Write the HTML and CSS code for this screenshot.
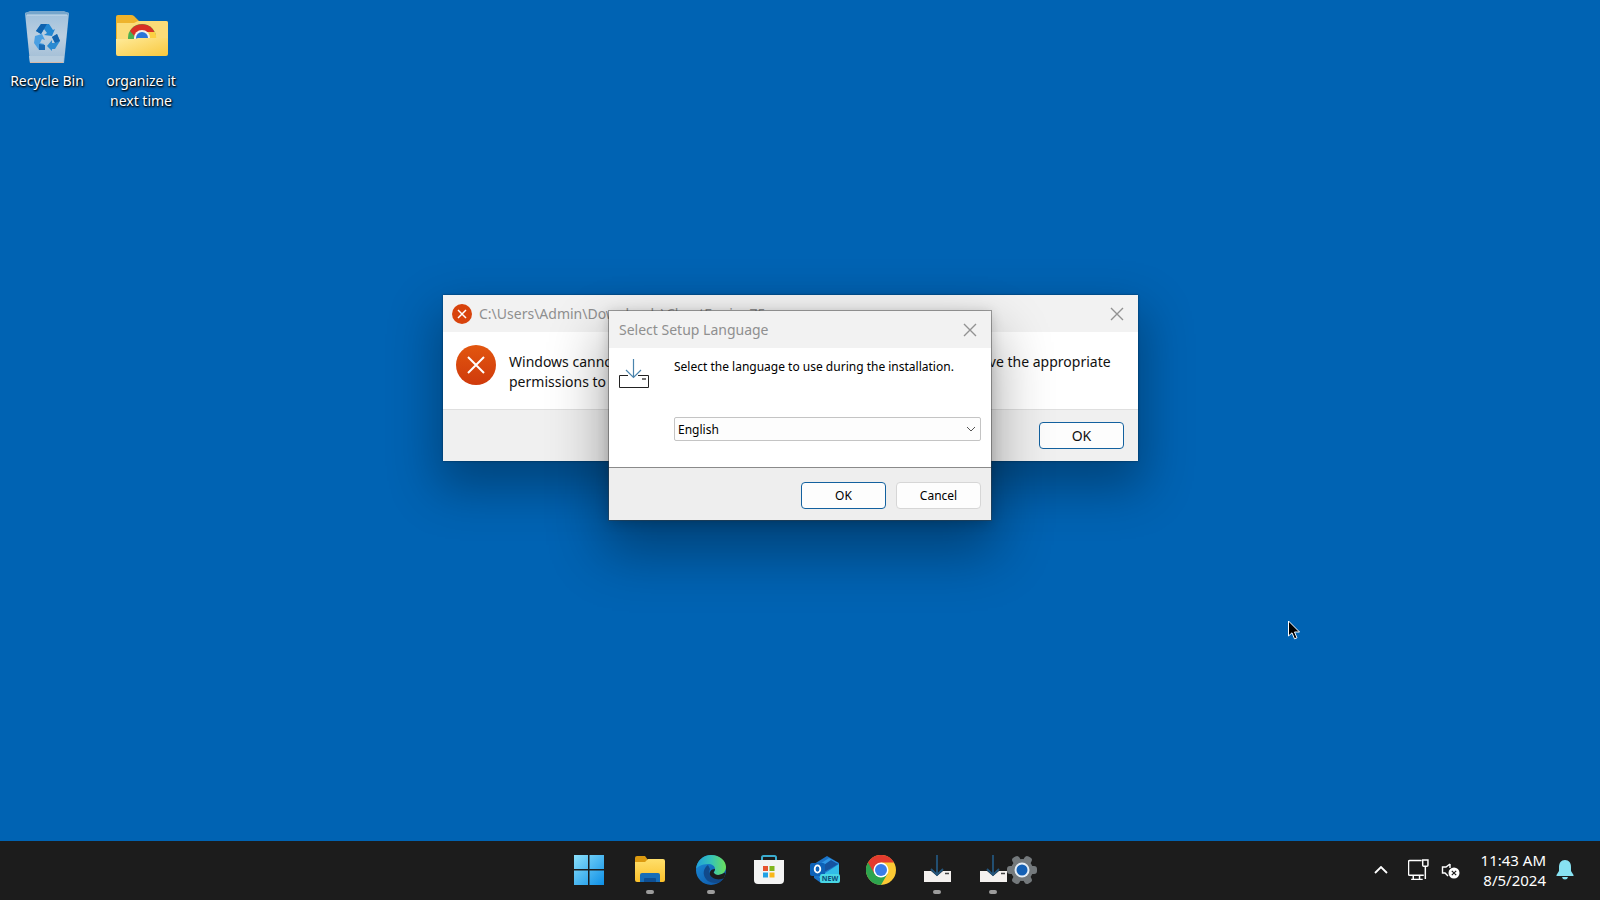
FILE: index.html
```html
<!DOCTYPE html>
<html lang="en">
<head>
<meta charset="utf-8">
<title>Desktop</title>
<link rel="stylesheet" href="styles.css">
</head>
<body>
<main class="desktop">
  <div class="shortcuts">
    <button class="shortcut" type="button">
      <svg class="shortcut-icon" viewBox="0 0 56 56" aria-hidden="true">
        <defs>
          <linearGradient id="bin" x1="0" y1="0" x2="0" y2="1"><stop offset="0" stop-color="#9dbfdb"/><stop offset=".5" stop-color="#bccfe0"/><stop offset="1" stop-color="#9fbcd5"/></linearGradient>
        </defs>
        <path d="M6 5l6-2h32l6 2-5 50H11z" fill="url(#bin)"/>
        <path d="M6 5l6-2h32l6 2-1 2H7z" fill="#76a6cc"/>
        <path d="M8 7h40" stroke="#c9dceb" stroke-width="1"/>
        <path d="M10 48h35l-1 7H11z" fill="#b5cbdd"/>
        <path d="M11 54.500h33" stroke="#d8b9a8" stroke-width="1"/>
        <path d="M22 16h8l4 6 2-1-3 7-8-1 3-2-3-4-3 5-5-3z" fill="#2387d2"/>
        <path d="M22 16h6l-6 10-5-3z" fill="#0f62ae"/>
        <path d="M16 28l7-2 3 6-3-1-2 4 4 1v6h-5l-5-7z" fill="#4a9fe2"/>
        <path d="M20 36l6 1v5h-6z" fill="#1a6ab4"/>
        <path d="M33 29l5-3 3 7-5 8h-3v2l-5-5 5-6v3h3z" fill="#2a8ad2"/>
        <path d="M33 29l5-3 3 7-5 2z" fill="#1564ae"/>
      </svg>
      <span>Recycle Bin</span>
    </button>
    <button class="shortcut" type="button">
      <svg class="shortcut-icon" viewBox="0 0 56 56" aria-hidden="true">
        <defs>
          <linearGradient id="fold" x1="0" y1="0" x2="1" y2="1"><stop offset="0" stop-color="#ffeb9a"/><stop offset="1" stop-color="#f8c83e"/></linearGradient>
          <clipPath id="peek"><path d="M10 10h40v21H10z"/></clipPath>
        </defs>
        <path d="M3 9q0-2 2-2h13q2 0 3 1l5 5h27q2 0 2 2v27H3z" fill="#eeb32c"/>
        <path d="M4 15h17l4-2h28q2 0 2 2v25H4z" fill="#fbdc78"/>
        <g clip-path="url(#peek)">
          <circle cx="29" cy="30" r="14" fill="#4caf50"/>
          <path d="M17 23a14 14 0 0 1 25 2H29l-6 5z" fill="#d93025"/>
          <path d="M29 24h13a14 14 0 0 1 1 8H29z" fill="#fdd043"/>
          <circle cx="29" cy="30" r="8" fill="#f4f0ea"/>
          <circle cx="29" cy="30" r="6" fill="#2b75d8"/>
        </g>
        <path d="M3 31h17q3 0 5-1h30v16q0 2-2 2H5q-2 0-2-2z" fill="url(#fold)"/>
      </svg>
      <span>organize it next time</span>
    </button>
  </div>

  <section class="window error-window" aria-label="Error">
    <header class="titlebar">
      <svg class="title-icon" viewBox="0 0 40 40" aria-hidden="true"><circle cx="20" cy="20" r="20" fill="#d8430c"/><path d="M12 12l16 16M28 12L12 28" stroke="#fff" stroke-width="3"/></svg>
      <h1 class="title">C:\Users\Admin\Downloads\CheatEngine75.exe</h1>
      <button class="close" type="button" aria-label="Close"><svg viewBox="0 0 14 14"><path d="M1 1l12 12M13 1L1 13"/></svg></button>
    </header>
    <div class="error-body">
      <svg class="error-icon" viewBox="0 0 40 40" aria-hidden="true">
        <defs><linearGradient id="err" x1="0" y1="0" x2="0" y2="1"><stop offset="0" stop-color="#e2560f"/><stop offset="1" stop-color="#cf3a0c"/></linearGradient></defs>
        <circle cx="20" cy="20" r="20" fill="url(#err)"/><path d="M12 12l16 16M28 12L12 28" stroke="#fff" stroke-width="2"/></svg>
      <p class="message">Windows cannot access the specified device, path, or file. You may not have the appropriate permissions to access the item.</p>
    </div>
    <footer class="error-foot"><button class="btn primary" type="button">OK</button></footer>
  </section>

  <section class="window setup-window" aria-label="Select Setup Language">
    <header class="titlebar">
      <h1 class="title">Select Setup Language</h1>
      <button class="close" type="button" aria-label="Close"><svg viewBox="0 0 14 14"><path d="M1 1l12 12M13 1L1 13"/></svg></button>
    </header>
    <div class="setup-body">
      <svg class="setup-icon" viewBox="0 0 32 32" aria-hidden="true">
        <path d="M10 17.500H1.500v12h29v-12H20" fill="none" stroke="#222" stroke-width="1"/>
        <path d="M24 21h4" stroke="#444" stroke-width="1.500"/>
        <path d="M15.500 1v18M8 12l7.500 7.500L23 12" fill="none" stroke="#4a84ad" stroke-width="1.200"/>
      </svg>
      <div class="setup-form">
        <label class="prompt" for="lang">Select the language to use during the installation.</label>
        <div class="combo">
          <select id="lang"><option>English</option></select>
          <svg class="combo-arrow" viewBox="0 0 10 6" aria-hidden="true"><path d="M1 1l4 4 4-4"/></svg>
        </div>
      </div>
    </div>
    <footer class="setup-foot">
      <button class="btn primary" type="button">OK</button>
      <button class="btn" type="button">Cancel</button>
    </footer>
  </section>

  <svg class="cursor" viewBox="0 0 12 20" aria-hidden="true"><path d="M.5 1v15l3.500-3.200 2.500 6 2.500-1-2.500-5.800h5z" fill="#000" stroke="#fff" stroke-width="1"/></svg>
</main>

<nav class="taskbar" aria-label="Taskbar">
  <div class="apps">
    <button class="app wide" type="button" aria-label="Start">
      <svg viewBox="0 0 30 30"><defs><linearGradient id="win" x1="0" y1="0" x2="1" y2="1"><stop offset="0" stop-color="#8be0fb"/><stop offset="1" stop-color="#0d8fe6"/></linearGradient></defs>
      <path d="M0 0h14v14H0zM15.500 0H30v14H15.500zM0 15.500h14V30H0zM15.500 15.500H30V30H15.500z" fill="url(#win)"/></svg>
    </button>
    <button class="app wide running" type="button" aria-label="File Explorer">
      <svg viewBox="0 0 30 30"><defs><linearGradient id="fe" x1="0" y1="0" x2="0" y2="1"><stop offset="0" stop-color="#ffdf6b"/><stop offset="1" stop-color="#fbc02a"/></linearGradient></defs>
      <path d="M0 3q0-2 2-2h8l3 4v5H0z" fill="#dc9a10"/><path d="M0 7h10l3-3h15q2 0 2 2v19q0 2-2 2H2q-2 0-2-2z" fill="url(#fe)"/><path d="M5 27v-7q0-2 2-2h16q2 0 2 2v7z" fill="#176db8"/><path d="M9 27v-3q0-1 1-1h10q1 0 1 1v3z" fill="#0d4f94"/></svg>
    </button>
    <button class="app wide running" type="button" aria-label="Edge">
      <svg viewBox="0 0 30 30"><defs><linearGradient id="ed" x1="0" y1="0" x2="1" y2="0"><stop offset="0" stop-color="#1f9fdb"/><stop offset=".5" stop-color="#36c3b8"/><stop offset="1" stop-color="#6be05a"/></linearGradient><linearGradient id="ed2" x1="0" y1="0" x2="1" y2="1"><stop offset="0" stop-color="#1b8fdc"/><stop offset="1" stop-color="#0c4fa0"/></linearGradient></defs>
      <circle cx="15" cy="15" r="15" fill="url(#ed2)"/>
      <path d="M0 14C1 5 8 0 15 0c9 0 15 6 15 12 0 5-4 8-8 8-3 0-5-1-4-3 1-1 1-2 1-3 0-3-3-5-7-5C6 9 1 12 0 14z" fill="url(#ed)"/>
      <path d="M12 10c-3 2-5 6-4 10 1 5 6 8 11 8 4 0 7-2 9-5-5 3-12 1-14-3-1-2-1-4 0-6z" fill="#114a8b"/>
      <path d="M19 14c0 2-2 3-1 4 2 3 7 2 10 0 2-1 1 3 0 5-5 3-12 1-14-3-1-3 1-6 5-6z" fill="#1c1c1c"/></svg>
    </button>
    <button class="app" type="button" aria-label="Microsoft Store">
      <svg viewBox="0 0 30 30"><path d="M8 6V2.500Q8 1 9.500 1h11Q22 1 22 2.500V6" fill="none" stroke="#3badd0" stroke-width="2"/><path d="M0 5h30v20q0 4-4 4H4q-4 0-4-4z" fill="#f3f4f3"/><path d="M9 11h5v5H9z" fill="#e6532f"/><path d="M15.500 11h5v5h-5z" fill="#7fb51d"/><path d="M9 17.500h5v5H9z" fill="#21a1e5"/><path d="M15.500 17.500h5v5h-5z" fill="#f9b719"/></svg>
    </button>
    <button class="app" type="button" aria-label="Outlook (new)">
      <svg viewBox="0 0 30 30"><path d="M4 9L17 1l12 7v17q0 3-3 3H11L4 23z" fill="#1b74c9"/><path d="M10 9l9-6 9 5-14 10z" fill="#2f97e6"/><path d="M29 9v16q0 3-3 3H14L9 22z" fill="#32bde8"/><path d="M13 18l15-9-7-4-10 7z" fill="#15539f"/><rect x="0" y="8" width="15" height="13" rx="2" fill="#0d62b8"/><ellipse cx="7.500" cy="14" rx="2.800" ry="3.600" fill="none" stroke="#fff" stroke-width="1.800"/><rect x="10" y="19" width="20" height="9" rx="2" fill="#48d6e5"/><text x="20" y="26" class="badge-text">NEW</text></svg>
    </button>
    <button class="app" type="button" aria-label="Chrome">
      <svg viewBox="0 0 30 30"><circle cx="15" cy="15" r="15" fill="#fbc934"/><path d="M15 15L2 7.500A15 15 0 0 0 15 30l6.500-11.300z" fill="#2da44e"/><path d="M2 7.500A15 15 0 0 1 28 7.500H15L8.500 18.700z" fill="#e33b2e"/><circle cx="15" cy="15" r="7.500" fill="#fff"/><circle cx="15" cy="15" r="6" fill="#3a7de8"/></svg>
    </button>
    <button class="app running" type="button" aria-label="Setup">
      <svg viewBox="0 0 30 30"><path d="M2 16h7l6 5 6-5h8v11H2z" fill="#f4f1ef"/><path d="M23 18.500h4" stroke="#444" stroke-width="1.500"/><path d="M15 0v20M9 14l6 6 6-6" fill="none" stroke="#24557c" stroke-width="1.800"/></svg>
    </button>
    <button class="app running" type="button" aria-label="Setup, language selection">
      <svg viewBox="0 0 30 30"><path d="M2 16h7l6 5 6-5h8v11H2z" fill="#f4f1ef"/><path d="M23 18.500h4" stroke="#444" stroke-width="1.500"/><path d="M15 0v20M9 14l6 6 6-6" fill="none" stroke="#24557c" stroke-width="1.800"/></svg>
    </button>
    <button class="app gear" type="button" aria-label="Settings">
      <svg viewBox="0 0 30 30"><g fill="#74797c"><circle cx="15" cy="15" r="11"/><rect x="11" y="0" width="8" height="30" rx="3" transform="rotate(30 15 15)"/><rect x="11" y="0" width="8" height="30" rx="3" transform="rotate(90 15 15)"/><rect x="11" y="0" width="8" height="30" rx="3" transform="rotate(150 15 15)"/></g><circle cx="15" cy="15" r="7.500" fill="#e6eef6"/><circle cx="15" cy="15" r="5.500" fill="#1560b4"/></svg>
    </button>
  </div>
  <div class="tray">
    <button class="tray-btn" type="button" aria-label="Show hidden icons"><svg class="chevron" viewBox="0 0 14 8"><path d="M1 7l6-6 6 6" fill="none" stroke="#fff" stroke-width="1.800"/></svg></button>
    <button class="tray-btn status" type="button" aria-label="Network and volume">
      <svg class="net" viewBox="0 0 20 20"><path d="M13 1.500H1.500q-1 0-1 1v12q0 1 1 1H15M5 15.500v4M11 15.500v4M3 19.500h11M14 1h5v5q0 1-1 1h-3q-1 0-1-1zM16.500 7v12" fill="none" stroke="#fff" stroke-width="1.400"/></svg>
      <svg class="vol" viewBox="0 0 20 20"><path d="M9 4L5 7H1.500v6H4l3 3M9 4v4" fill="none" stroke="#fff" stroke-width="1.400"/><circle cx="13" cy="13" r="5.500" fill="#fff"/><path d="M10.800 10.800l4.400 4.400M15.200 10.800l-4.400 4.400" stroke="#1c1c1c" stroke-width="1.200"/></svg>
    </button>
    <button class="tray-btn clock" type="button"><span>11:43 AM</span><span>8/5/2024</span></button>
    <button class="tray-btn" type="button" aria-label="Notifications"><svg class="bell" viewBox="0 0 18 20"><path d="M9 0c4 0 6 3 6 7v4l2.500 4v1H.5v-1L3 11V7c0-4 2-7 6-7z" fill="#87e2f2"/><path d="M6 17h6q-.5 2.500-3 2.500T6 17z" fill="#87e2f2"/></svg></button>
  </div>
</nav>
</body>
</html>
```
FILE: styles.css
```css
* { box-sizing: border-box; }

body {
  margin: 0;
  height: 100vh;
  display: flex;
  flex-direction: column;
  overflow: hidden;
  background: #0063b3;
  font-family: "Noto Sans", "Open Sans", sans-serif;
  font-size: 14px;
  color: #111;
}

button {
  font: inherit;
  color: inherit;
  background: none;
  border: 0;
  padding: 0;
}

svg { display: block; }

h1, p { margin: 0; font-weight: 400; }

.desktop { position: relative; flex: 1; }

.shortcuts { display: flex; align-items: flex-start; }

.shortcut {
  width: 94px;
  padding-top: 8px;
  display: flex;
  flex-direction: column;
  align-items: center;
  gap: 7px;
  color: #fff;
  line-height: 20px;
  text-shadow: 0 1px 2px #000, 1px 1px 2px #000;
}

.shortcut-icon { width: 56px; height: 56px; }

.shortcut span { width: 80px; }

.window {
  position: absolute;
  display: flex;
  flex-direction: column;
  background: #fff;
}

.error-window {
  left: 443px;
  top: 295px;
  width: 695px;
  box-shadow: 0 0 2px rgba(0, 0, 0, .5), 0 22px 46px 6px rgba(0, 0, 0, .3);
}

.setup-window {
  left: 609px;
  top: 311px;
  width: 382px;
  box-shadow: 0 0 0 1px rgba(60, 60, 60, .45), 0 28px 52px 6px rgba(0, 0, 0, .32), 0 2px 12px rgba(0, 0, 0, .2);
}

.titlebar {
  height: 37px;
  display: flex;
  align-items: center;
  gap: 7px;
  padding: 0 14px 0 9px;
  background: #f2f2f2;
}

.setup-window .titlebar { padding-left: 10px; }

.title-icon { width: 20px; height: 20px; }

.title { flex: 1; font-size: 14px; color: #8f8f8f; }

.close svg {
  width: 14px;
  height: 14px;
  fill: none;
  stroke: #929292;
  stroke-width: 1.4;
}

.error-body {
  display: flex;
  gap: 13px;
  padding: 13px 16px 17px 13px;
}

.error-icon { width: 40px; height: 40px; flex: none; }

.message { padding-top: 7px; line-height: 20px; }

.error-foot {
  display: flex;
  justify-content: flex-end;
  padding: 12px 14px;
  background: #f0f0f0;
  border-top: 1px solid #dfdfdf;
}

.btn {
  width: 85px;
  height: 27px;
  background: #fdfdfd;
  border: 1px solid #d6d6d6;
  border-radius: 4px;
}

.primary { border-color: #13619f; }

.setup-body {
  flex: 1;
  display: flex;
  gap: 24px;
  padding: 10px 10px 26px 9px;
  font-size: 12px;
  color: #000;
}

.setup-icon { width: 32px; height: 32px; flex: none; }

.setup-form {
  flex: 1;
  display: flex;
  flex-direction: column;
  gap: 42px;
}

.prompt { line-height: 17px; white-space: nowrap; }

.combo { position: relative; }

.combo select {
  display: block;
  width: 100%;
  height: 24px;
  padding: 0 3px;
  appearance: none;
  background: #fdfdfd;
  border: 1px solid #c4c4c4;
  border-radius: 2px;
  font: inherit;
  color: inherit;
}

.combo-arrow {
  position: absolute;
  right: 5px;
  top: 9px;
  width: 10px;
  height: 6px;
  fill: none;
  stroke: #555;
}

.setup-foot {
  display: flex;
  justify-content: flex-end;
  gap: 10px;
  padding: 14px 10px 11px;
  background: #eeeeee;
  border-top: 1px solid #8a8a8a;
  font-size: 12px;
  color: #000;
}

.cursor {
  position: absolute;
  left: 1288px;
  top: 620px;
  width: 12px;
  height: 20px;
}

.taskbar {
  height: 59px;
  display: grid;
  grid-template-columns: 1fr auto 1fr;
  align-items: center;
  background: #1c1c1c;
  color: #fff;
}

.apps { grid-column: 2; display: flex; padding-right: 5px; }

.app {
  position: relative;
  width: 56px;
  height: 59px;
  padding-bottom: 1px;
  display: flex;
  align-items: center;
  justify-content: center;
}

.app svg { width: 30px; height: 30px; }

.wide { width: 61px; }

.gear { width: 16px; justify-content: flex-end; }

.gear svg { flex: none; }

.running::after {
  content: "";
  position: absolute;
  left: calc(50% - 4px);
  bottom: 6px;
  width: 8px;
  height: 4px;
  border-radius: 2px;
  background: #9c9c9c;
}

.badge-text {
  font: 700 7px "Noto Sans", sans-serif;
  fill: #0b4d78;
  text-anchor: middle;
}

.tray {
  grid-column: 3;
  justify-self: end;
  display: flex;
  align-items: center;
  gap: 20px;
  padding: 0 26px 2px 0;
}

.chevron { width: 14px; height: 8px; }

.status { display: flex; align-items: center; gap: 12px; }

.net { width: 21px; height: 21px; }

.vol { width: 20px; height: 20px; }

.clock {
  display: flex;
  flex-direction: column;
  align-items: flex-end;
  font-size: 15px;
  line-height: 20px;
}

.bell { width: 18px; height: 20px; }

.tray-btn:last-child { margin-left: -10px; }
```
